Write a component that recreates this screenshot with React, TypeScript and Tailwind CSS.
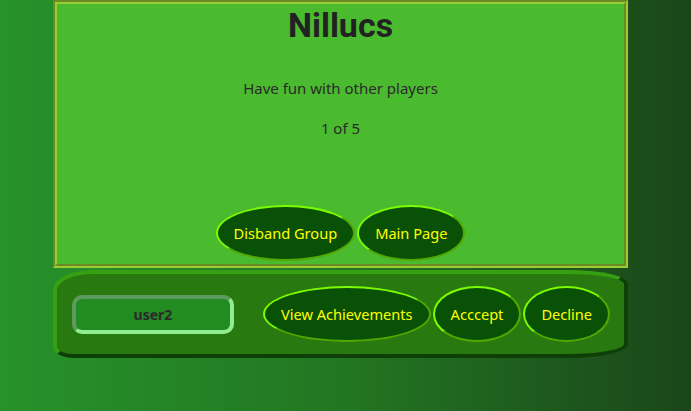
import React from "react";

const btn =
  "h-[56px] rounded-[50%] bg-[#0a5108] text-[#ffff00] text-[14.6px] border-2 [border-style:outset] border-[#7cfc00] px-4 leading-[20px] whitespace-nowrap";

export default function App() {
  return (
    <div
      className="w-full h-[411px] bg-gradient-to-r from-[#27922a] via-[#227622] to-[#1a461a] overflow-hidden"
      style={{ fontFamily: '"Noto Sans", "Open Sans", sans-serif' }}
    >
      <div className="ml-[53px] w-[575px] h-[268px] border-2 border-t-[#6b8a23] border-l-[#6b8a23] border-r-[#9acd32] border-b-[#9acd32]">
        <div className="h-full border-2 border-t-[#9acd32] border-l-[#9acd32] border-r-[#6b8a23] border-b-[#6b8a23] bg-[#4aba2f] flex flex-col items-center text-[#2a2a2a]">
          <h1 className="text-[34px] leading-[40px] font-bold pt-[1px] text-[#222]" style={{ fontFamily: "Roboto, sans-serif" }}>
            Nillucs
          </h1>
          <p className="mt-[33px] text-[15px] leading-[20px]">Have fun with other players</p>
          <p className="mt-[20px] text-[15px] leading-[20px]">1 of 5</p>
          <div className="mt-auto mb-[3px] flex gap-[2px]">
            <button className={btn}>Disband Group</button>
            <button className={btn}>Main Page</button>
          </div>
        </div>
      </div>
      <div className="mt-[2px] ml-[53px] w-[575px] h-[88px] bg-[#28790f] border-4 border-t-[#36a012] border-l-[#36a012] border-r-[#0e3f07] border-b-[#0e3f07] rounded-[40px_60px_60px_20px/20px_14px_14px_12px] flex items-center pl-[15px]">
        <div className="w-[162px] h-[39px] border-4 [border-style:inset] border-[#90ee90] rounded-[10px] bg-[#228b22] flex items-center justify-center text-[14px] font-bold text-[#2a2a2a]">
          user2
        </div>
        <div className="ml-[29px] flex gap-[2px]">
          <button className={btn}>View Achievements</button>
          <button className={btn}>Acccept</button>
          <button className={btn}>Decline</button>
        </div>
      </div>
    </div>
  );
}
